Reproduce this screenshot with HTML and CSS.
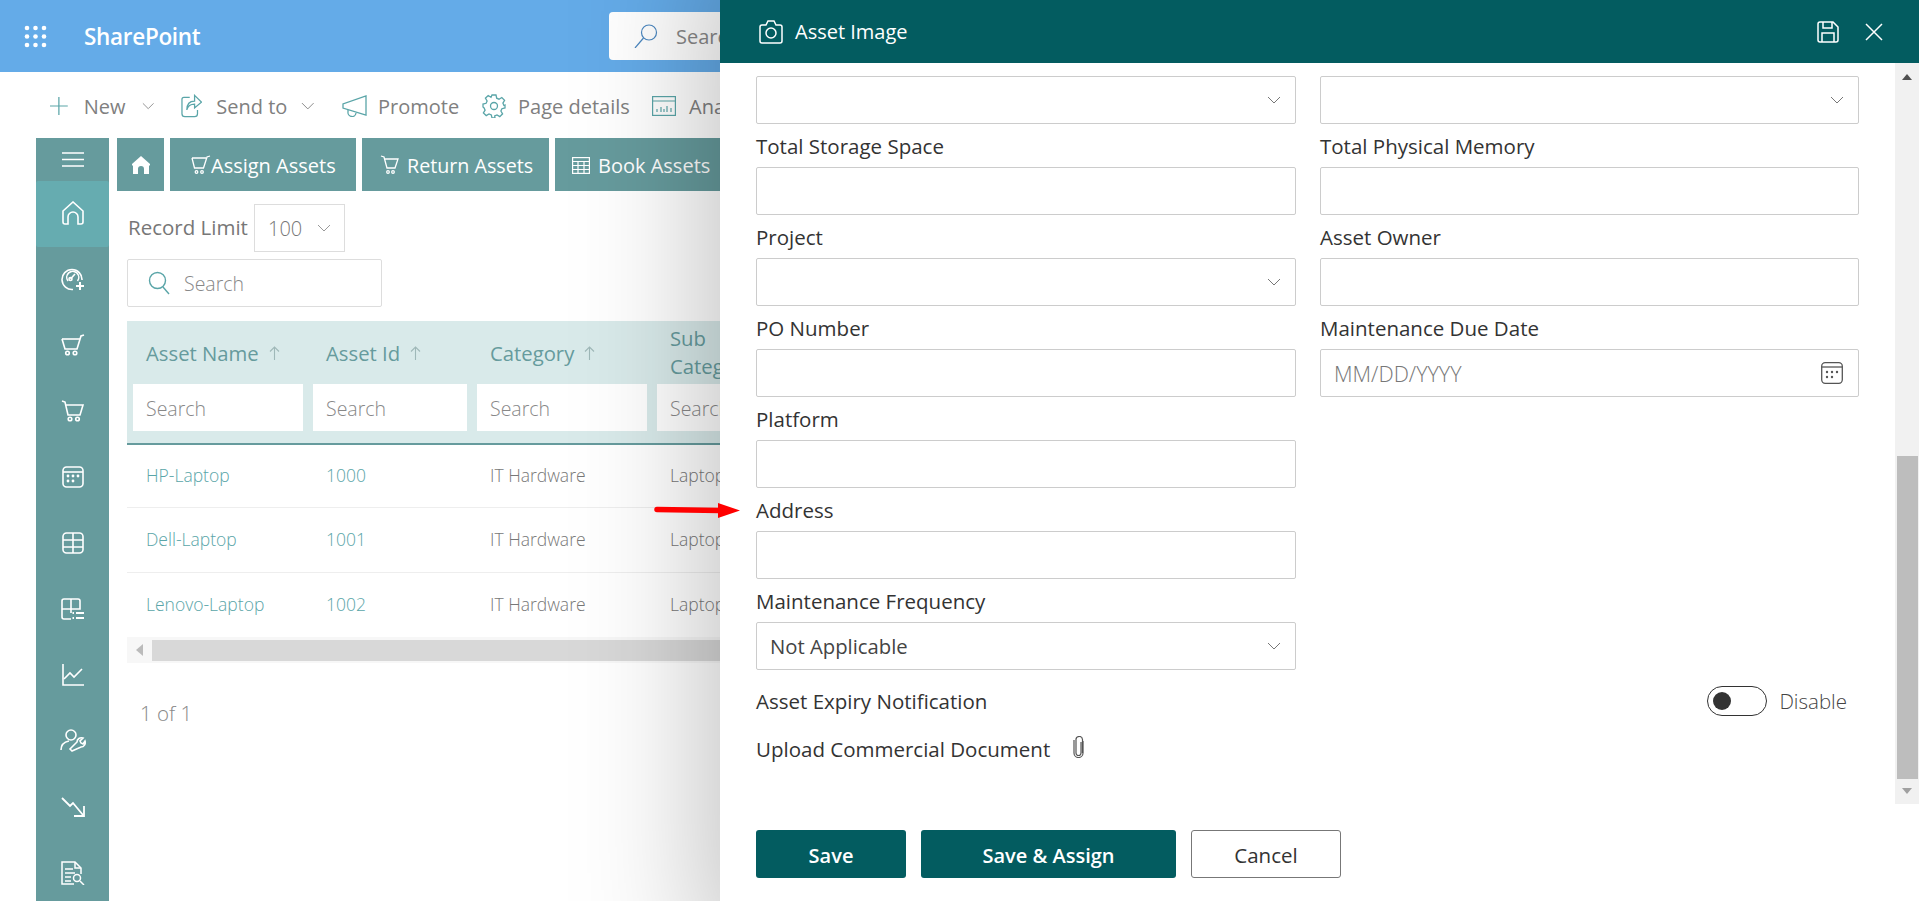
FILE: index.html
```html
<!DOCTYPE html>
<html lang="en">
<head>
  <meta charset="UTF-8">
  <meta name="viewport" content="width=device-width, initial-scale=1.0">
  <title>Asset Image</title>
  <link rel="stylesheet" href="styles.css">
</head>
<body>
  <header class="suite-bar">
    <svg class="waffle" width="23" height="23" viewBox="0 0 23 23" fill="#fff"><circle cx="3" cy="3" r="2.300"/><circle cx="11.500" cy="3" r="2.300"/><circle cx="20" cy="3" r="2.300"/><circle cx="3" cy="11.500" r="2.300"/><circle cx="11.500" cy="11.500" r="2.300"/><circle cx="20" cy="11.500" r="2.300"/><circle cx="3" cy="20" r="2.300"/><circle cx="11.500" cy="20" r="2.300"/><circle cx="20" cy="20" r="2.300"/></svg>
    <span class="brand">SharePoint</span>
    <div class="suite-search">
      <svg width="24" height="24" viewBox="0 0 24 24" fill="none" stroke="#4b87c0" stroke-width="1.200"><circle cx="15" cy="8.500" r="7.500"/><path d="M9.500 14 1 24"/></svg>
      <span>Search</span>
    </div>
  </header>

  <nav class="command-bar">
    <span class="cmd cmd-new">
      <svg width="20" height="20" viewBox="0 0 20 20" stroke="#5aa5a8" stroke-width="1.400"><path d="M10 0v20M0 10h20"/></svg>
      New
      <svg class="cmd-chev" width="14" height="8" viewBox="0 0 14 8" fill="none" stroke="#888"><path d="M1 1l6 6 6-6"/></svg>
    </span>
    <span class="cmd cmd-send">
      <svg width="22" height="24" viewBox="0 0 22 24" fill="none" stroke="#5aa5a8" stroke-width="1.300"><path d="M9 3H3a2 2 0 0 0-2 2v15a3 3 0 0 0 3 3h10a3 3 0 0 0 3-3v-4"/><path d="M14 1l7 7-7 6v-4c-4 0-7 2-8 6 0-6 3-9 8-9z"/></svg>
      Send to
      <svg class="cmd-chev" width="14" height="8" viewBox="0 0 14 8" fill="none" stroke="#888"><path d="M1 1l6 6 6-6"/></svg>
    </span>
    <span class="cmd cmd-promote">
      <svg width="25" height="22" viewBox="0 0 25 22" fill="none" stroke="#5aa5a8" stroke-width="1.300"><path d="M24 1v19L1 13V9z"/><path d="M6 15v2a4 4 0 0 0 8 1"/></svg>
      Promote
    </span>
    <span class="cmd cmd-details">
      <svg width="24" height="24" viewBox="0 0 24 24" fill="none" stroke="#5aa5a8" stroke-width="1.300"><circle cx="12" cy="12" r="3.500"/><path d="M10 1h4l.7 3.200 2.300 1 2.800-1.700 2.800 2.900-1.700 2.700 1 2.400L23 11v3l-3.100.7-1 2.300 1.700 2.800-2.800 2.800-2.800-1.700-2.300 1L13 24h-3l-.7-3.100-2.300-1-2.800 1.700L1.400 19l1.700-2.800-1-2.300L1 13v-3l3.100-.7 1-2.300L3.400 4.200 6.200 1.500 9 3.200z"/></svg>
      Page details
    </span>
    <span class="cmd cmd-analytics">
      <svg width="24" height="20" viewBox="0 0 24 20" fill="none" stroke="#5aa5a8" stroke-width="1.200"><rect x=".6" y=".6" width="22.800" height="18.800"/><path d="M.6 5h22.800M5 16v-3M9 16v-5M12 16v-3M15 16v-6M19 16v-4"/></svg>
      Analytics
    </span>
  </nav>

  <div class="app">
    <aside class="side-nav">
      <div class="side-toggle">
        <svg width="22" height="15" viewBox="0 0 22 15" stroke="#fff" stroke-width="1.300"><path d="M0 1h22M0 7.500h22M0 14h22"/></svg>
      </div>
      <div class="side-item active">
        <svg width="22" height="24" viewBox="0 0 22 24" fill="none" stroke="#fff" stroke-width="1.600"><path d="M1 10 11 1l10 9v11a2 2 0 0 1-2 2h-3v-7a5 5 0 0 0-10 0v7H3a2 2 0 0 1-2-2z"/></svg>
      </div>
      <div class="side-item">
        <svg width="24" height="24" viewBox="0 0 24 24" fill="none" stroke="#fff" stroke-width="1.600"><path d="M21 13a10 10 0 1 0-9 9.500"/><path d="M16.500 16a6 6 0 1 0-9.500 0" transform="translate(0 -2)"/><path d="M9.500 12 14 7"/><circle cx="9.500" cy="12" r="1.500"/><path d="M19 15v8M15 19h8" stroke-width="2"/></svg>
      </div>
      <div class="side-item">
        <svg width="24" height="22" viewBox="0 0 24 22" fill="none" stroke="#fff" stroke-width="1.600"><path d="M1 5h18"/><path d="M1 5l3 10h12l4-13 3-1"/><circle cx="6.500" cy="19" r="1.800"/><circle cx="14" cy="19" r="1.800"/></svg>
      </div>
      <div class="side-item">
        <svg width="24" height="22" viewBox="0 0 24 22" fill="none" stroke="#fff" stroke-width="1.600"><path d="M1 1l3 1 3 13h12l3-10H5"/><circle cx="9" cy="19" r="1.800"/><circle cx="16.500" cy="19" r="1.800"/></svg>
      </div>
      <div class="side-item">
        <svg width="22" height="22" viewBox="0 0 22 22" fill="none" stroke="#fff" stroke-width="1.600"><rect x="1" y="1" width="20" height="20" rx="3.500"/><path d="M1 6h20"/><g fill="#fff" stroke="none"><circle cx="6" cy="10" r="1.400"/><circle cx="11" cy="10" r="1.400"/><circle cx="16" cy="10" r="1.400"/><circle cx="6" cy="15" r="1.400"/><circle cx="11" cy="15" r="1.400"/></g></svg>
      </div>
      <div class="side-item">
        <svg width="22" height="22" viewBox="0 0 22 22" fill="none" stroke="#fff" stroke-width="1.600"><rect x="1" y="1" width="20" height="20" rx="3.500"/><path d="M1 8h20M1 15h20M11 1v20"/></svg>
      </div>
      <div class="side-item">
        <svg width="24" height="22" viewBox="0 0 24 22" fill="none" stroke="#fff" stroke-width="1.600"><path d="M10 21H3a2 2 0 0 1-2-2V3a2 2 0 0 1 2-2h14a2 2 0 0 1 2 2v8H1M10 1v14"/><path d="M15 15h8M15 20h8M11.500 15h1.500M11.500 20h1.500" stroke-width="1.800"/></svg>
      </div>
      <div class="side-item">
        <svg width="22" height="22" viewBox="0 0 22 22" fill="none" stroke="#fff" stroke-width="1.600"><path d="M1 0v21h21"/><path d="M2 15l6-6 4 4 8-8"/></svg>
      </div>
      <div class="side-item">
        <svg width="26" height="24" viewBox="0 0 26 24" fill="none" stroke="#fff" stroke-width="1.600"><circle cx="11" cy="6" r="5"/><path d="M1 21c0-5 3-8 8-9"/><path d="M12 22l-2-2 7-7c0-3 3-5 6-4l-3 3 1 2 2 1 2-3c1 3-1 6-4 6z"/></svg>
      </div>
      <div class="side-item">
        <svg width="24" height="20" viewBox="0 0 24 20" fill="none" stroke="#fff" stroke-width="1.800"><path d="M1 1l8 8 3-3 10 12"/><path d="M23 9v10H13"/></svg>
      </div>
      <div class="side-item">
        <svg width="24" height="24" viewBox="0 0 24 24" fill="none" stroke="#fff" stroke-width="1.500"><path d="M13 23H1V1h13l6 6v6"/><path d="M14 1v6h6M4 8h8M4 12h10M4 16h6M4 20h6"/><circle cx="16" cy="17" r="3.500"/><path d="M19 20l4 4"/></svg>
      </div>
    </aside>

    <main class="content">
      <div class="tab-row">
        <span class="tab tab-home">
          <svg width="20" height="20" viewBox="0 0 20 20" fill="#fff"><path d="M10 1 1 9v1l1 1v8h5v-5a3 3 0 0 1 6 0v5h5v-8l1-1V9z"/></svg>
        </span>
        <span class="tab tab-assign">
          <svg width="20" height="20" viewBox="0 0 20 20" fill="none" stroke="#fff" stroke-width="1.300"><path d="M1 3h14M1 3l2.500 10h9L16 2l3-1"/><circle cx="5.500" cy="17" r="1.300"/><circle cx="11" cy="17" r="1.300"/></svg>
          Assign Assets
        </span>
        <span class="tab tab-return">
          <svg width="20" height="20" viewBox="0 0 20 20" fill="none" stroke="#fff" stroke-width="1.300"><path d="M1 1l3 1 3 11h8l3-9H5"/><circle cx="8" cy="17" r="1.300"/><circle cx="13" cy="17" r="1.300"/></svg>
          Return Assets
        </span>
        <span class="tab tab-book">
          <svg width="18" height="17" viewBox="0 0 18 17" fill="none" stroke="#fff" stroke-width="1.200"><rect x=".6" y=".6" width="16.800" height="15.800"/><path d="M.6 4.500h16.800M.6 8.500h16.800M.6 12.500h16.800M6 4.500v12M12 4.500v12"/></svg>
          Book Assets
        </span>
      </div>

      <div class="limit-row">
        <span class="limit-label">Record Limit</span>
        <span class="limit-select">100
          <svg width="14" height="8" viewBox="0 0 14 8" fill="none" stroke="#999"><path d="M1 1l6 6 6-6"/></svg>
        </span>
      </div>

      <div class="grid-search">
        <svg width="22" height="24" viewBox="0 0 22 24" fill="none" stroke="#5aa5a8" stroke-width="1.400"><circle cx="9.500" cy="9.500" r="8"/><path d="M15 16l6 7"/></svg>
        <span>Search</span>
      </div>

      <div class="grid">
        <div class="grid-head">
          <div class="col col-name">
            <div class="col-title">Asset Name <svg class="sort" width="11" height="14" viewBox="0 0 11 14" fill="none" stroke="#9fb8b8" stroke-width="1.100"><path d="M5.500 14V1M1 5.500 5.500 1 10 5.500"/></svg></div>
            <div class="col-filter">Search</div>
          </div>
          <div class="col col-id">
            <div class="col-title">Asset Id <svg class="sort" width="11" height="14" viewBox="0 0 11 14" fill="none" stroke="#9fb8b8" stroke-width="1.100"><path d="M5.500 14V1M1 5.500 5.500 1 10 5.500"/></svg></div>
            <div class="col-filter">Search</div>
          </div>
          <div class="col col-cat">
            <div class="col-title">Category <svg class="sort" width="11" height="14" viewBox="0 0 11 14" fill="none" stroke="#9fb8b8" stroke-width="1.100"><path d="M5.500 14V1M1 5.500 5.500 1 10 5.500"/></svg></div>
            <div class="col-filter">Search</div>
          </div>
          <div class="col col-sub">
            <div class="col-title">Sub<br>Category</div>
            <div class="col-filter">Search</div>
          </div>
        </div>
        <div class="grid-row first">
          <a class="col-name">HP-Laptop</a><a class="col-id">1000</a><span class="col-cat">IT Hardware</span><span class="col-sub">Laptop</span>
        </div>
        <div class="grid-row">
          <a class="col-name">Dell-Laptop</a><a class="col-id">1001</a><span class="col-cat">IT Hardware</span><span class="col-sub">Laptop</span>
        </div>
        <div class="grid-row last">
          <a class="col-name">Lenovo-Laptop</a><a class="col-id">1002</a><span class="col-cat">IT Hardware</span><span class="col-sub">Laptop</span>
        </div>
        <div class="h-scroll">
          <span class="h-arrow"></span>
          <span class="h-thumb"></span>
        </div>
      </div>

      <div class="pager">1 of 1</div>
    </main>
  </div>

  <!-- side panel over the page -->
  <section class="panel">
    <div class="panel-head">
      <svg width="24" height="24" viewBox="0 0 24 24" fill="none" stroke="#fff" stroke-width="1.500"><path d="M3 5h4l2-4h6l2 4h4a2 2 0 0 1 2 2v14a2 2 0 0 1-2 2H3a2 2 0 0 1-2-2V7a2 2 0 0 1 2-2z"/><circle cx="12" cy="13" r="5"/></svg>
      <span class="panel-title">Asset Image</span>
      <svg class="head-save" width="22" height="22" viewBox="0 0 22 22" fill="none" stroke="#fff" stroke-width="1.500"><path d="M3 1h13l5 5v13a2 2 0 0 1-2 2H3a2 2 0 0 1-2-2V3a2 2 0 0 1 2-2z"/><path d="M6 1v6h9V1M5 21v-9h12v9"/></svg>
      <svg class="head-close" width="18" height="18" viewBox="0 0 18 18" stroke="#fff" stroke-width="1.500"><path d="M1 1l16 16M17 1 1 17"/></svg>
    </div>

    <div class="panel-body">
      <div class="form">
        <div class="form-grid">
          <div class="field no-label"><div class="control"><svg class="chev" width="14" height="8" viewBox="0 0 14 8" fill="none" stroke="#777"><path d="M1 1l6 6 6-6"/></svg></div></div>
          <div class="field no-label"><div class="control"><svg class="chev" width="14" height="8" viewBox="0 0 14 8" fill="none" stroke="#777"><path d="M1 1l6 6 6-6"/></svg></div></div>

          <div class="field"><label>Total Storage Space</label><div class="control"></div></div>
          <div class="field"><label>Total Physical Memory</label><div class="control"></div></div>

          <div class="field"><label>Project</label><div class="control"><svg class="chev" width="14" height="8" viewBox="0 0 14 8" fill="none" stroke="#777"><path d="M1 1l6 6 6-6"/></svg></div></div>
          <div class="field"><label>Asset Owner</label><div class="control"></div></div>

          <div class="field"><label>PO Number</label><div class="control"></div></div>
          <div class="field"><label>Maintenance Due Date</label>
            <div class="control"><span class="placeholder">MM/DD/YYYY</span>
              <svg class="chev cal" width="22" height="22" viewBox="0 0 22 22" fill="none" stroke="#555" stroke-width="1.300"><rect x=".7" y=".7" width="20.600" height="20.600" rx="3.500"/><path d="M.7 5h20.600"/><g fill="#555" stroke="none"><circle cx="6" cy="10" r="1.200"/><circle cx="11" cy="10" r="1.200"/><circle cx="16" cy="10" r="1.200"/><circle cx="6" cy="15" r="1.200"/><circle cx="11" cy="15" r="1.200"/></g></svg>
            </div>
          </div>

          <div class="field"><label>Platform</label><div class="control"></div></div>
          <div></div>

          <div class="field"><label>Address</label><div class="control"></div></div>
          <div></div>

          <div class="field"><label>Maintenance Frequency</label><div class="control"><span class="value">Not Applicable</span><svg class="chev" width="14" height="8" viewBox="0 0 14 8" fill="none" stroke="#777"><path d="M1 1l6 6 6-6"/></svg></div></div>
          <div></div>
        </div>

        <div class="expiry-row">
          <span class="form-label">Asset Expiry Notification</span>
          <span class="toggle"><span class="knob"></span></span>
          <span class="toggle-text">Disable</span>
        </div>

        <div class="upload-row">
          <span class="form-label">Upload Commercial Document</span>
          <svg class="clip" width="11" height="22" viewBox="0 0 11 22" fill="none" stroke="#555" stroke-width="1.200"><path d="M8 6v11a2.500 2.500 0 0 1-5 0V4a3 3 0 0 1 6.500-.5V17"/><path d="M10 5v12a4.500 4.500 0 0 1-9 0V4"/></svg>
        </div>
      </div>

      <div class="v-scroll">
        <span class="v-arrow up"></span>
        <span class="v-thumb"></span>
        <span class="v-arrow down"></span>
      </div>
    </div>

    <div class="panel-foot">
      <button class="btn btn-save">Save</button>
      <button class="btn btn-assign">Save &amp; Assign</button>
      <button class="btn btn-cancel">Cancel</button>
    </div>
  </section>

  <!-- annotation arrow drawn on the screenshot -->
  <svg class="red-arrow" width="86" height="17" viewBox="0 0 86 17"><path d="M3 7.500 66 8.500" stroke="#f00" stroke-width="5.500" stroke-linecap="round"/><path d="M64 1l22 7.500L64 16z" fill="#f00"/></svg>
</body>
</html>
```

FILE: styles.css
```css
* { box-sizing: border-box; }
html, body { margin: 0; height: 100%; }
body {
  width: 1919px;
  height: 901px;
  overflow: hidden;
  position: relative;
  font-family: "Open Sans", "Noto Sans", sans-serif;
  color: #333;
  background: #fff;
}

/* suite bar */
.suite-bar { height: 72px; background: #64abe8; display: flex; align-items: center; position: relative; }
.waffle { margin-left: 24px; }
.brand { margin-left: 37px; color: #fff; font-size: 22.5px; font-weight: 600; letter-spacing: -0.3px; }
.suite-search { position: absolute; left: 609px; top: 12px; width: 400px; height: 48px; background: #fff; border-radius: 4px; display: flex; align-items: center; padding-left: 25px; gap: 18px; font-size: 20px; color: #888; }

/* command bar */
.command-bar { height: 66px; display: flex; align-items: center; padding: 2px 0 0 50px; font-size: 20px; color: #808080; }
.cmd { display: flex; align-items: center; white-space: nowrap; flex-shrink: 0; }
.cmd-chev { margin-left: auto; }
.cmd-new { width: 131px; gap: 16px; padding-right: 27px; }
.cmd-send { width: 161px; gap: 14px; padding-right: 27px; }
.cmd-promote { width: 140px; gap: 11px; }
.cmd-details { width: 170px; gap: 12px; }
.cmd-analytics { gap: 13px; }

/* left app */
.app { display: flex; margin-left: 36px; }
.side-nav { width: 73px; height: 763px; background: #669b9d; flex-shrink: 0; }
.side-toggle { height: 43px; display: flex; align-items: center; justify-content: center; padding-bottom: 1px; }
.side-item { height: 66px; display: flex; align-items: center; justify-content: center; padding-bottom: 2px; }
.side-item.active { background: #66acb0; border-radius: 2px; padding-bottom: 3px; }

.content { flex: 1; padding-left: 8px; min-width: 0; }
.tab-row { display: flex; gap: 6px; }
.tab { height: 53px; background: #669b9d; color: #fff; font-size: 20px; display: flex; align-items: center; white-space: nowrap; padding-top: 1px; }
.tab-home { width: 47px; justify-content: center; padding-top: 0; }
.tab-assign { width: 186px; padding-left: 21px; }
.tab-return { width: 187px; padding-left: 18px; gap: 7px; font-size: 19.7px; }
.tab-book { width: 200px; padding-left: 17px; gap: 8px; }

.limit-row { display: flex; align-items: center; margin: 13px 0 7px 11px; }
.limit-label { font-size: 20.5px; color: #777; width: 126px; margin-top: -2px; white-space: nowrap; }
.limit-select { width: 91px; height: 48px; border: 1px solid #ddd; display: flex; align-items: center; padding-left: 13px; gap: 15px; font-size: 20px; font-weight: 300; color: #777; }

.grid-search { width: 255px; height: 48px; margin-left: 10px; border: 1px solid #ddd; border-radius: 2px; display: flex; align-items: center; padding-left: 20px; gap: 14px; font-size: 19.5px; font-weight: 300; color: #888; }
.grid-search span { margin-top: 1px; }

.grid { width: 640px; margin: 14px 0 0 10px; overflow: hidden; }
.grid-head { height: 124px; background: #d9eaea; border-bottom: 2px solid #669b9d; display: flex; }
.col { flex-shrink: 0; }
.col-title { height: 63px; display: flex; align-items: center; gap: 10px; font-size: 20.3px; color: #669b9d; padding-left: 13px; white-space: nowrap; }
.col-sub .col-title { display: block; padding-top: 3px; line-height: 28px; }
.sort { margin-top: 1px; }
.col-filter { height: 47px; background: #fff; font-size: 19.5px; font-weight: 300; color: #888; padding-left: 13px; line-height: 50px; }
.col-name { width: 170px; margin-left: 6px; }
.col-id { width: 154px; margin-left: 10px; }
.col-cat { width: 170px; margin-left: 10px; }
.col-sub { width: 170px; margin-left: 10px; white-space: nowrap; }
.grid-row { height: 65px; display: flex; align-items: center; border-bottom: 1px solid #eee; font-size: 17.5px; font-weight: 300; padding-bottom: 3px; }
.grid-row > * { padding-left: 13px; white-space: nowrap; flex-shrink: 0; }
.grid-row a { color: #5aa5a8; }
.grid-row span { color: #777; }
.grid-row.first { height: 63px; }
.grid-row.last { height: 64px; border-bottom: 0; }
.h-scroll { height: 26px; background: #f7f7f7; display: flex; align-items: center; }
.h-arrow { width: 0; height: 0; border-style: solid; border-width: 6px 7px 6px 0; border-color: transparent #bbb transparent transparent; margin-left: 9px; }
.h-thumb { height: 21px; flex: 1; background: #d8d8d8; margin-left: 9px; }
.pager { margin: 36px 0 0 23px; font-size: 20.5px; font-weight: 300; color: #888; }

/* panel */
.panel { position: absolute; top: 0; left: 720px; width: 1199px; height: 901px; background: #fff; box-shadow: 45px 0 120px 60px rgba(0, 0, 0, 0.25); display: flex; flex-direction: column; }
.panel-head { height: 63px; background: #035c60; display: flex; align-items: center; padding-left: 39px; color: #fff; flex-shrink: 0; }
.panel-title { margin-left: 12px; font-size: 20px; flex: 1; }
.head-close { margin: 0 36px 0 26px; }

.panel-body { display: flex; height: 741px; flex-shrink: 0; }
.form { flex: 1; padding: 13px 36px 0 36px; }
.form-grid { display: grid; grid-template-columns: 540px 539px; column-gap: 24px; }
.field label { display: block; height: 43px; padding-top: 10px; font-size: 20.5px; line-height: 24px; color: #333; white-space: nowrap; }
.field.no-label { height: 48px; }
.control { height: 48px; border: 1px solid #ccc; border-radius: 2px; display: flex; align-items: center; padding: 0 13px; }
.chev { margin-left: auto; margin-right: 1px; }
.chev.cal { margin-right: 2px; }
.placeholder { color: #777; font-weight: 300; font-size: 21.5px; }
.value { color: #444; font-size: 20.3px; }
.form-label { font-size: 20.5px; color: #333; }
.expiry-row { display: flex; align-items: center; margin-top: 16px; height: 30px; }
.expiry-row .form-label { flex: 1; }
.toggle { width: 60px; height: 30px; margin-top: -1px; border: 1px solid #333; border-radius: 15px; display: flex; align-items: center; padding-left: 5px; }
.knob { width: 18px; height: 18px; border-radius: 50%; background: #333; }
.toggle-text { font-size: 20.5px; font-weight: 300; color: #444; margin: 0 12px 0 12px; }
.upload-row { display: flex; align-items: center; margin-top: 19px; gap: 23px; }
.clip { margin-top: -5px; }
.v-scroll { width: 24px; background: #f1f1f1; display: flex; flex-direction: column; align-items: center; }
.v-arrow { width: 0; height: 0; border-style: solid; border-color: transparent; }
.v-arrow.up { border-width: 0 5px 6px; border-bottom-color: #505050; margin: 11px 0 auto; }
.v-arrow.down { border-width: 6px 5px 0; border-top-color: #a0a0a0; margin: 9px 0 10px; }
.v-thumb { width: 21px; height: 323px; background: #bdbdbd; }

.panel-foot { display: flex; gap: 15px; padding: 26px 0 0 36px; }
.btn { height: 48px; border-radius: 3px; font-family: inherit; font-size: 20px; font-weight: 600; border: 0; padding: 2px 0 0; }
.btn-save { width: 150px; background: #035c60; color: #fff; }
.btn-assign { width: 255px; background: #035c60; color: #fff; }
.btn-cancel { width: 150px; background: #fff; color: #333; border: 1px solid #777; font-weight: 400; font-size: 20.5px; }

/* red arrow sits on top of the panel edge */
.red-arrow { position: absolute; left: 654px; top: 502px; }
```
